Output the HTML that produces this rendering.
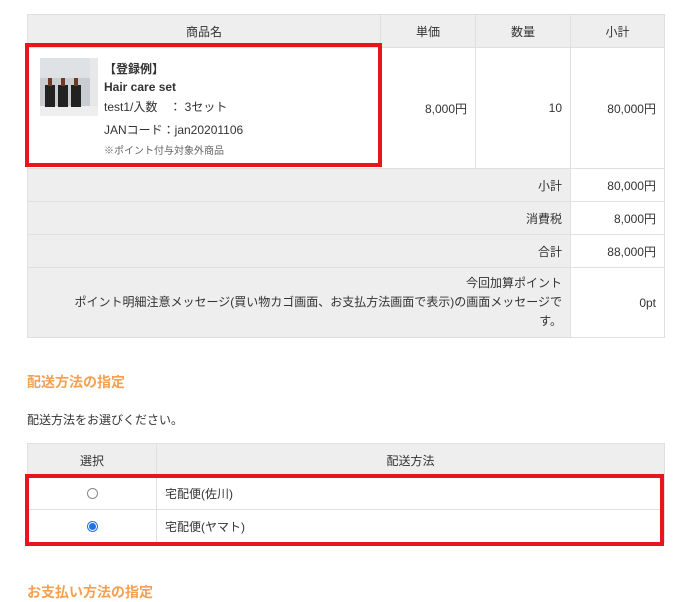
<!DOCTYPE html>
<html><head><meta charset="utf-8"><style>
*{margin:0;padding:0;box-sizing:border-box}
body{width:695px;height:593px;overflow:hidden;background:#fff;font-family:"Liberation Sans","Noto Sans CJK JP",sans-serif;font-size:12px;color:#333;position:relative}
.a{position:absolute}
.c{position:absolute;border:1px solid #e0e0e0;display:flex;align-items:center}
.g{background:#eee}
.r{justify-content:flex-end;padding-right:8px}
.m{justify-content:center}
.red{position:absolute;border:4px solid #e8141e}
h2{position:absolute;font-size:14px;color:#f5a050;font-weight:bold}
</style></head><body>
<div class="c g m" style="left:27px;top:14px;width:354px;height:34px">商品名</div>
<div class="c g m" style="left:380px;top:14px;width:96px;height:34px">単価</div>
<div class="c g m" style="left:475px;top:14px;width:96px;height:34px">数量</div>
<div class="c g m" style="left:570px;top:14px;width:95px;height:34px">小計</div>
<div class="c" style="left:27px;top:47px;width:354px;height:122px"></div>
<div class="c r" style="left:380px;top:47px;width:96px;height:122px">8,000円</div>
<div class="c r" style="left:475px;top:47px;width:96px;height:122px">10</div>
<div class="c r" style="left:570px;top:47px;width:95px;height:122px">80,000円</div>
<svg class="a" style="left:40px;top:58px" width="58" height="58" viewBox="0 0 58 58">
<rect width="58" height="58" fill="#c9ccd0"/><rect x="0" y="0" width="58" height="20" fill="#dfe2e5"/><rect x="50" y="0" width="8" height="58" fill="#e8e8e8"/>
<rect x="0" y="48" width="58" height="10" fill="#eee"/>
<rect x="5" y="27" width="10" height="22" fill="#222"/><rect x="8" y="20" width="4" height="8" fill="#6b3a20"/>
<rect x="18" y="27" width="10" height="22" fill="#222"/><rect x="21" y="20" width="4" height="8" fill="#6b3a20"/>
<rect x="31" y="27" width="10" height="22" fill="#222"/><rect x="34" y="20" width="4" height="8" fill="#6b3a20"/>
</svg>
<div class="a" style="left:104px;top:60px;font-weight:bold">【登録例】</div>
<div class="a" style="left:104px;top:80px;font-weight:bold">Hair care set</div>
<div class="a" style="left:104px;top:98px">test1/入数　：  3セット</div>
<div class="a" style="left:104px;top:121px">JANコード：jan20201106</div>
<div class="a" style="left:104px;top:142px;font-size:10px;color:#666">※ポイント付与対象外商品</div>
<div class="red" style="left:25px;top:43px;width:357px;height:124px"></div>
<div class="c g r" style="left:27px;top:168px;width:544px;height:34px">小計</div>
<div class="c r" style="left:570px;top:168px;width:95px;height:34px">80,000円</div>
<div class="c g r" style="left:27px;top:201px;width:544px;height:34px">消費税</div>
<div class="c r" style="left:570px;top:201px;width:95px;height:34px">8,000円</div>
<div class="c g r" style="left:27px;top:234px;width:544px;height:34px">合計</div>
<div class="c r" style="left:570px;top:234px;width:95px;height:34px">88,000円</div>
<div class="c g r" style="left:27px;top:267px;width:544px;height:71px;text-align:right;line-height:19px">今回加算ポイント<br>ポイント明細注意メッセージ(買い物カゴ画面、お支払方法画面で表示)の画面メッセージで<br>す。</div>
<div class="c r" style="left:570px;top:267px;width:95px;height:71px">0pt</div>
<h2 style="left:27px;top:372px">配送方法の指定</h2>
<div class="a" style="left:27px;top:411px">配送方法をお選びください。</div>
<div class="c g m" style="left:27px;top:443px;width:130px;height:34px">選択</div>
<div class="c g m" style="left:156px;top:443px;width:509px;height:34px">配送方法</div>
<div class="c m" style="left:27px;top:476px;width:130px;height:34px"><span style="width:11px;height:11px;border:1px solid #888;border-radius:50%;display:block"></span></div>
<div class="c" style="left:156px;top:476px;width:509px;height:34px;padding-left:8px">宅配便(佐川)</div>
<div class="c m" style="left:27px;top:509px;width:130px;height:34px"><span style="width:11px;height:11px;border:1px solid #1a73e8;border-radius:50%;display:flex;align-items:center;justify-content:center"><span style="width:7px;height:7px;background:#1a73e8;border-radius:50%"></span></span></div>
<div class="c" style="left:156px;top:509px;width:509px;height:34px;padding-left:8px">宅配便(ヤマト)</div>
<div class="red" style="left:25px;top:474px;width:639px;height:72px"></div>
<h2 style="left:27px;top:582px">お支払い方法の指定</h2>
</body></html>
